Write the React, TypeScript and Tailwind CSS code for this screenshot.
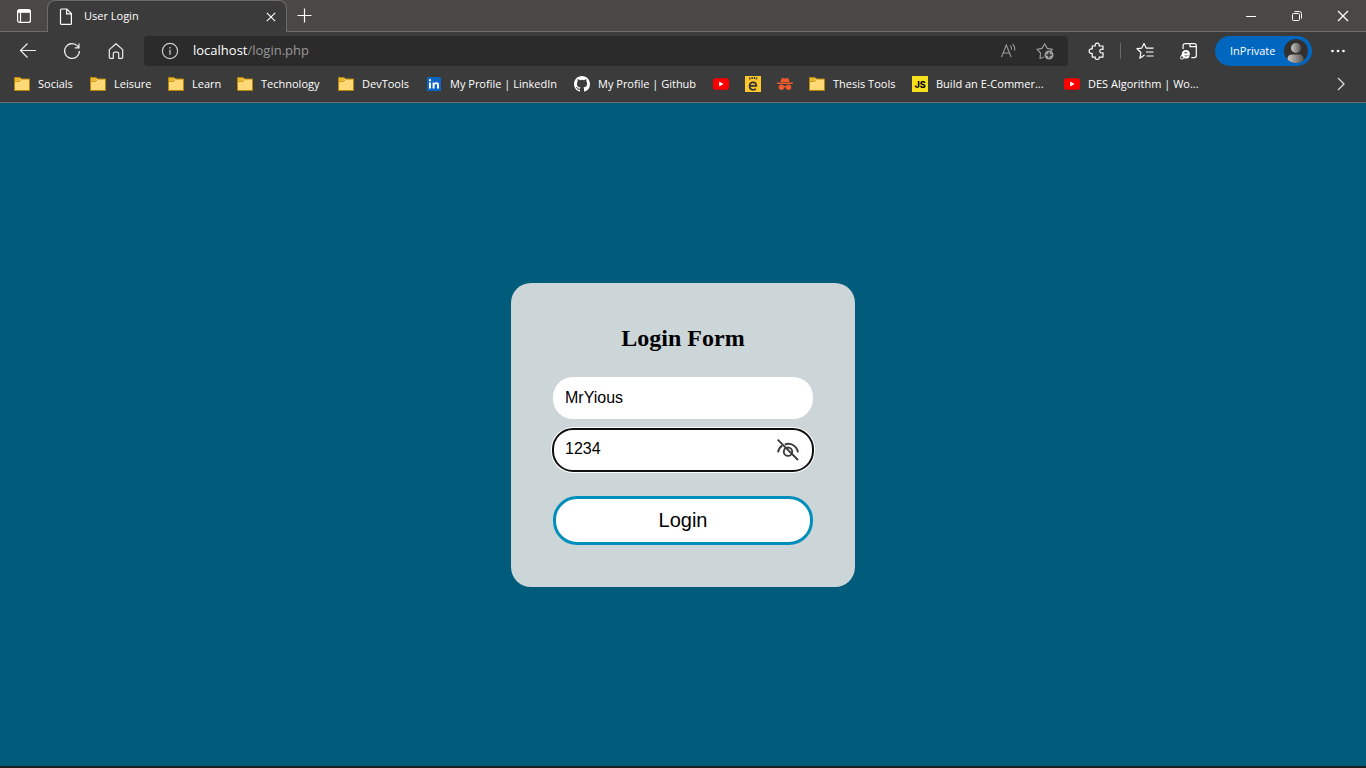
import React, { useState } from "react";

type IconProps = { className?: string };

const FolderIcon = () => (
  <svg viewBox="0 0 16 16" className="size-4">
    <path d="M.5 1.500h5.500l1.500 1.500h8v11.500H.5z" fill="#ffd976" stroke="#b8860b" />
    <path d="M1 2h4.800l1 1.100-1.500 1.900H1z" fill="#e8b931" />
    <path d="M1 5.500h4.500L7 4" fill="none" stroke="#c4951a" strokeWidth=".9" />
  </svg>
);

const LinkedInIcon = () => (
  <svg viewBox="0 0 16 16" className="size-4">
    <rect x="1" y="1" width="14" height="14" rx=".6" fill="#0a66c2" />
    <path d="M3 6.400h2v6.200H3zM3 3.300h2v2H3zM6.600 6.400h1.900v.9c.4-.7 1.100-1.100 2-1.100 1.900 0 2.500 1.200 2.500 3v3.400h-2V9.500c0-.9-.2-1.500-1-1.500s-1.400.6-1.400 1.500v3.100h-2z" fill="#fff" />
  </svg>
);

const GithubIcon = () => (
  <svg viewBox="0 0 16 16" className="size-4">
    <path
      fill="#fff"
      d="M8 0C3.58 0 0 3.58 0 8c0 3.54 2.29 6.53 5.47 7.59.4.07.55-.17.55-.38 0-.19-.01-.82-.01-1.49-2.01.37-2.53-.49-2.69-.94-.09-.23-.48-.94-.82-1.13-.28-.15-.68-.52-.01-.53.63-.01 1.08.58 1.23.82.72 1.21 1.87.87 2.33.66.07-.52.28-.87.51-1.07-1.78-.2-3.64-.89-3.64-3.95 0-.87.31-1.59.82-2.15-.08-.2-.36-1.02.08-2.12 0 0 .67-.21 2.2.82a7.6 7.6 0 0 1 4 0c1.53-1.04 2.2-.82 2.2-.82.44 1.1.16 1.92.08 2.12.51.56.82 1.27.82 2.15 0 3.07-1.87 3.75-3.65 3.95.29.25.54.73.54 1.48 0 1.07-.01 1.93-.01 2.2 0 .21.15.46.55.38A8.01 8.01 0 0 0 16 8c0-4.42-3.58-8-8-8z"
    />
  </svg>
);

const YoutubeIcon = () => (
  <svg viewBox="0 0 16 16" className="size-4">
    <rect y="2.3" width="16" height="11.4" rx="2.8" fill="#f00" />
    <path d="M6.200 5.600v4.800L10.600 8z" fill="#fff" />
  </svg>
);

const EmojiLetterIcon = () => (
  <svg viewBox="0 0 16 16" className="size-4">
    <rect width="16" height="16" fill="#ffc72c" />
    <path d="M4.800 9.800h6.400c0-2.200-1.200-3.500-3.100-3.500S4.600 7.800 4.600 10.100s1.400 3.700 3.600 3.700c1.100 0 2.100-.3 2.800-.9" fill="none" stroke="#333" strokeWidth="1.800" />
    <path d="M4.300 1.700l1 1.700M7.100 1v2M9.500 1l-.2 2M12 1.700l-1 1.600" stroke="#333" strokeWidth="1.300" />
  </svg>
);

const IncognitoIcon = () => (
  <svg viewBox="0 0 16 16" className="size-4" fill="#f1592a">
    <path d="M4.600 2.500c.3-.6.8-.7 1.400-.5l2 .5 2-.5c.6-.2 1.100-.1 1.400.5L12.600 6H3.400z" />
    <rect y="6.400" width="16" height="1.500" rx=".6" />
    <circle cx="4.500" cy="11.300" r="2.700" />
    <circle cx="11.500" cy="11.300" r="2.700" />
    <path d="M6 10.400c1.300-.6 2.700-.6 4 0v1.300c-1.200-.7-2.800-.7-4 0z" />
  </svg>
);

const JsIcon = () => (
  <span aria-hidden="true" className="flex size-4 items-center justify-center bg-[#f7df1e] font-['Inter',sans-serif] text-[9px] leading-none font-extrabold text-black">
    JS
  </span>
);

const WorkspaceIcon = () => (
  <svg viewBox="0 0 16 16" className="size-4" fill="none" stroke="#fff" strokeWidth="1.200">
    <rect x="1.600" y="1.600" width="12.800" height="12.800" rx="2" />
    <path d="M2 4.200V3.500Q2 2 3.500 2h9Q14 2 14 3.500v.7z" fill="#fff" />
    <path d="M4.500 4v10.400" />
  </svg>
);

const PageIcon = () => (
  <svg viewBox="0 0 16 18" className="h-[18px] w-4" fill="none" stroke="#fff" strokeWidth="1.200">
    <path d="M3.500 1h5.300l4.600 4.600v9.800c0 .6-.4 1-1 1H3.500c-.6 0-1-.4-1-1V2c0-.6.4-1 1-1z" />
    <path d="M8.600 1.200v4.600h4.600" />
  </svg>
);

const CloseIcon = ({ className }: IconProps) => (
  <svg viewBox="0 0 12 12" className={className} fill="none" stroke="#fff" strokeWidth="1.300">
    <path d="M1 1l10 10M11 1L1 11" />
  </svg>
);

const PlusIcon = () => (
  <svg viewBox="0 0 16 16" className="size-4" fill="none" stroke="#fff" strokeWidth="1.200">
    <path d="M7.500 .5v14M.5 7.500h14" />
  </svg>
);

const BackIcon = () => (
  <svg viewBox="0 0 18 18" className="size-[18px]" fill="none" stroke="#eee" strokeWidth="1.200">
    <path d="M17 8.500H2M8.500 1.500L1.500 8.500l7 7" />
  </svg>
);

const RefreshIcon = () => (
  <svg viewBox="0 0 18 18" className="size-[18px]" fill="none" stroke="#eee" strokeWidth="1.200">
    <path d="M16.400 9A7.400 7.400 0 1 1 14.600 4.200L16 5.800M16 1.600v4.200h-4.200" />
  </svg>
);

const HomeIcon = () => (
  <svg viewBox="0 0 18 18" className="size-[18px]" fill="none" stroke="#eee" strokeWidth="1.200" strokeLinejoin="round">
    <path d="M2.300 7.600L9 1.700l6.700 5.900v7.900c0 .5-.3.800-.8.800h-3.200v-4.500c0-1-.6-1.600-1.500-1.600H7.800c-.9 0-1.500.6-1.500 1.600v4.500H3.100c-.5 0-.8-.3-.8-.8z" />
  </svg>
);

const InfoIcon = () => (
  <svg viewBox="0 0 18 18" className="size-[18px]" fill="none" stroke="#ccc" strokeWidth="1.200">
    <circle cx="9" cy="9" r="7.600" />
    <path d="M9 7.800v5M9 5v1.500" strokeWidth="1.300" />
  </svg>
);

const ReadAloudIcon = () => (
  <svg viewBox="0 0 18 18" className="size-[18px]" fill="none" stroke="#999" strokeWidth="1.100">
    <path d="M1.500 15L6.300 3 11.100 15M3.100 11h6.400M10.100 3.600c1.200 1.100 1.700 2.500 1.500 4.200M12.500 2.200c1.900 1.700 2.600 3.800 2.200 6.400" />
  </svg>
);

const AddFavoriteIcon = () => (
  <svg viewBox="0 0 18 18" className="size-[18px]" fill="none" stroke="#999" strokeWidth="1.200" strokeLinejoin="round">
    <path d="M8 15l-4 1.500.6-5.500L1 7.300l5-.9L8.700 1.700l2.500 4.700 5.300.9-2 2.100" />
    <circle cx="13" cy="13" r="4.500" fill="#a0a0a0" stroke="none" />
    <path d="M13 10.300v5.400M10.300 13h5.400" stroke="#2b2b2b" strokeWidth="1.400" />
  </svg>
);

const PuzzleIcon = () => (
  <svg viewBox="0 0 18 18" className="size-[18px]" fill="none" stroke="#fff" strokeWidth="1.200" strokeLinejoin="round">
    <path d="M4.200 4h3.100C6.600 2.500 7.700 1.200 9.200 1.200s2.600 1.300 1.900 2.800H15v3.500c-1.900-.8-3.300.2-3.300 1.600s1.400 2.400 3.300 1.600v4.400h-3.900c.7 1.500-.4 2.300-1.900 2.300s-2.600-.8-1.900-2.300H4.200v-3.800c-1.800.7-3.100-.6-3.100-2.200s1.300-2.700 3.100-2z" />
  </svg>
);

const FavoritesIcon = () => (
  <svg viewBox="0 0 18 18" className="size-[18px]" fill="none" stroke="#fff" strokeWidth="1.200" strokeLinejoin="round">
    <path d="M8.500 13L3.900 16.200l1-5.700L1 6.700l4.800-.6L8 1.600l2.200 4.500h7.300M10 10h7.500M10.500 14h7" />
  </svg>
);

const IeModeIcon = () => (
  <svg viewBox="0 0 18 18" className="size-[18px]" fill="none" stroke="#fff" strokeWidth="1.200">
    <path d="M3.100 7V3.700c0-1.100.9-2 2-2h9.200c1.100 0 2 .9 2 2v9.900c0 1.100-.9 2-2 2h-3M10 1.900v2.700h6" />
    <path d="M3.200 12.300h5.600c0-2.100-1.200-3.300-2.900-3.300s-3.100 1.500-3.100 3.300 1.400 3.200 3.100 3.200c1.200 0 2.200-.5 2.800-1.400" strokeWidth="2.200" />
    <path d="M2.200 12.600c-2 2.500-2 4.500-.7 4.500.9 0 2.200-.7 3.300-1.700" strokeWidth="1" />
  </svg>
);

const AvatarIcon = () => (
  <svg viewBox="0 0 24 24" className="size-6">
    <defs>
      <linearGradient id="avatarFade" x1="0" x2="1">
        <stop offset="0" stopColor="#c9c7c5" />
        <stop offset="1" stopColor="#595653" />
      </linearGradient>
      <clipPath id="avatarClip">
        <circle cx="12" cy="12" r="12" />
      </clipPath>
    </defs>
    <g clipPath="url(#avatarClip)">
      <rect width="24" height="24" fill="#33312f" />
      <circle cx="12" cy="9" r="5" fill="url(#avatarFade)" />
      <path d="M3.500 20c0-3 1.500-4.500 4.500-4.500h7c3 0 4.500 1.500 4.500 4.500v5h-16z" fill="url(#avatarFade)" />
    </g>
  </svg>
);

const MoreIcon = () => (
  <svg viewBox="0 0 16 16" className="size-4" fill="#fff">
    <circle cx="2.500" cy="8" r="1.300" />
    <circle cx="8" cy="8" r="1.300" />
    <circle cx="13.500" cy="8" r="1.300" />
  </svg>
);

const EyeOffIcon = () => (
  <svg viewBox="0 0 22 22" className="size-[22px]" fill="none" stroke="#3c3c3c" strokeWidth="1.900">
    <path d="M1 13.300C1.500 10.500 3 8 5.200 6.600M7.800 5.500C14 3.300 20 7 21 13.300" />
    <circle cx="11" cy="12.700" r="4.200" />
    <path d="M.7 .7l20.300 20.300" />
  </svg>
);

const bookmarks = [
  { icon: FolderIcon, title: "Socials", width: "w-[76px]" },
  { icon: FolderIcon, title: "Leisure", width: "w-[78px]" },
  { icon: FolderIcon, title: "Learn", width: "w-[69px]" },
  { icon: FolderIcon, title: "Technology", width: "w-[101px]" },
  { icon: FolderIcon, title: "DevTools", width: "w-[88px]" },
  { icon: LinkedInIcon, title: "My Profile | LinkedIn", width: "w-[148px]" },
  { icon: GithubIcon, title: "My Profile | Github", width: "w-[139px]" },
  { icon: YoutubeIcon, title: "", width: "w-8" },
  { icon: EmojiLetterIcon, title: "", width: "w-8" },
  { icon: IncognitoIcon, title: "", width: "w-8" },
  { icon: FolderIcon, title: "Thesis Tools", width: "w-[103px]" },
  { icon: JsIcon, title: "Build an E-Commer...", width: "w-[152px]" },
  { icon: YoutubeIcon, title: "DES Algorithm | Wo...", width: "w-[152px]" },
];

function TitleBar() {
  return (
    <div className="flex h-8 bg-[#4a4845]">
      <div className="flex w-[47px] items-center justify-center border-b border-[#6e6c6a]">
        <button aria-label="Tab actions"><WorkspaceIcon /></button>
      </div>
      <div className="flex w-60 items-center rounded-t-lg border border-b-0 border-[#6e6c6a] bg-[#3b3b3b] px-2.5">
        <PageIcon />
        <span className="ml-2.5 flex-1 text-[11px] text-white">User Login</span>
        <button aria-label="Close tab"><CloseIcon className="size-[10px]" /></button>
      </div>
      <div className="flex flex-1 items-center border-b border-[#6e6c6a] pl-2.5">
        <button aria-label="New tab"><PlusIcon /></button>
        <div className="ml-auto flex">
          <button aria-label="Minimize" className="flex w-[46px] items-center justify-center">
            <svg viewBox="0 0 12 12" className="size-3" stroke="#fff"><path d="M1 6.500h10" /></svg>
          </button>
          <button aria-label="Restore" className="flex w-[46px] items-center justify-center">
            <svg viewBox="0 0 12 12" className="size-3" fill="none" stroke="#fff">
              <rect x="1.500" y="3.500" width="7" height="7" rx="1" />
              <path d="M3.500 1.500h5a2 2 0 0 1 2 2v5" />
            </svg>
          </button>
          <button aria-label="Close window" className="flex w-[46px] items-center justify-center">
            <CloseIcon className="size-3" />
          </button>
        </div>
      </div>
    </div>
  );
}

function Toolbar() {
  return (
    <div className="flex h-[38px] items-center pr-5 pl-[19px]">
      <div className="flex gap-[26px]">
        <button aria-label="Back"><BackIcon /></button>
        <button aria-label="Refresh"><RefreshIcon /></button>
        <button aria-label="Home"><HomeIcon /></button>
      </div>
      <div className="ml-[19px] flex h-[30px] flex-1 items-center rounded bg-[#2b2b2b] pr-3.5 pl-[17px]">
        <InfoIcon />
        <a href="#" className="ml-3.5 flex-1 text-[13px] text-[#999]">
          <span className="text-white">localhost</span>/login.php
        </a>
        <div className="flex gap-[18px]">
          <button aria-label="Read aloud"><ReadAloudIcon /></button>
          <button aria-label="Add to favorites"><AddFavoriteIcon /></button>
        </div>
      </div>
      <div className="ml-5 flex items-center">
        <button aria-label="Extensions"><PuzzleIcon /></button>
        <div className="mr-[15px] ml-3.5 h-4 w-px bg-[#6a6a6a]" />
        <button aria-label="Favorites"><FavoritesIcon /></button>
        <button aria-label="Internet Explorer mode" className="ml-[26px]"><IeModeIcon /></button>
        <button className="ml-[17px] flex h-[30px] w-[97px] items-center justify-between rounded-full bg-[#0067c0] pr-1 pl-[15px] text-[11px] text-white">
          InPrivate
          <AvatarIcon />
        </button>
        <button aria-label="More" className="ml-[18px]"><MoreIcon /></button>
      </div>
    </div>
  );
}

function BookmarksBar() {
  return (
    <nav aria-label="Bookmarks" className="flex h-[33px] items-center border-b border-[#6e6c6a] pb-1 pl-3.5">
      {bookmarks.map(({ icon: Icon, title, width }, i) => (
        <a key={i} href="#" className={`flex shrink-0 items-center gap-2 text-[11px] whitespace-nowrap text-white ${width}`}>
          <Icon />
          {title && <span>{title}</span>}
        </a>
      ))}
      <button aria-label="More bookmarks" className="mr-[18px] ml-auto">
        <svg viewBox="0 0 14 14" className="size-3.5" fill="none" stroke="#ddd" strokeWidth="1.300"><path d="M4 1l6 6-6 6" /></svg>
      </button>
    </nav>
  );
}

function LoginForm() {
  const [visible, setVisible] = useState(true);
  return (
    <form onSubmit={(e) => e.preventDefault()} className="flex w-[344px] flex-col rounded-[20px] bg-[#ccd5d8] p-[42px] font-['Liberation_Sans',sans-serif] text-black">
      <h2 className="mb-[26px] text-center font-['Liberation_Serif',serif] text-[24px] leading-[26px] font-bold">Login Form</h2>
      <input aria-label="Username" type="text" defaultValue="MrYious" className="h-[42px] rounded-[20px] bg-white px-3 text-base outline-none" />
      <div className="mt-2.5 flex h-[42px] items-center rounded-[20px] bg-white px-3 shadow-[0_0_0_2px_#ffffff] outline-2 -outline-offset-1 outline-[#101010]">
        <input aria-label="Password" type={visible ? "text" : "password"} defaultValue="1234" className="h-10 min-w-0 flex-1 bg-transparent pb-0.5 text-base outline-none" />
        <button type="button" aria-label="Toggle password visibility" onClick={() => setVisible(!visible)} className="mr-0.5">
          <EyeOffIcon />
        </button>
      </div>
      <button type="submit" className="mt-[25px] h-[49px] rounded-[24px] border-3 border-[#008fbc] bg-white text-xl">Login</button>
    </form>
  );
}

export default function App() {
  return (
    <div className="flex min-h-screen flex-col border-b-2 border-[#1f1f1f] bg-[#005c7a]">
      <header className="bg-[#3b3b3b] font-['Open_Sans',sans-serif]">
        <TitleBar />
        <Toolbar />
        <BookmarksBar />
      </header>
      <main className="flex flex-1 items-center justify-center">
        <LoginForm />
      </main>
    </div>
  );
}
